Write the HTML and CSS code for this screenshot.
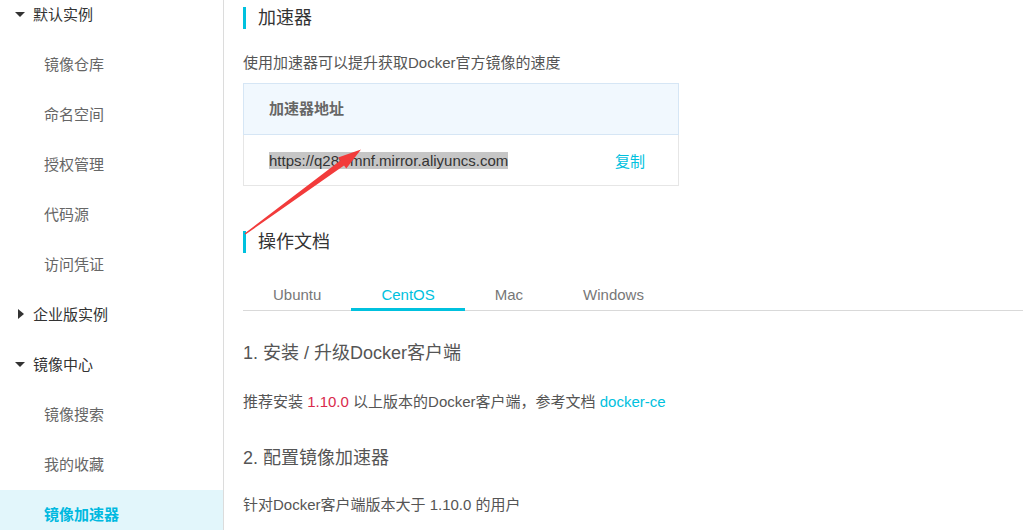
FILE: index.html
```html
<!DOCTYPE html>
<html lang="zh-CN">
<head>
    <meta charset="UTF-8">
    <meta name="viewport" content="width=device-width, initial-scale=1.0">
    <title>镜像加速器</title>
    <link rel="stylesheet" href="styles.css">
</head>
<body>

<div class="sidebar">
    <ul class="menu">
        <li class="menu-group open">默认实例</li>
        <li class="menu-item">镜像仓库</li>
        <li class="menu-item">命名空间</li>
        <li class="menu-item">授权管理</li>
        <li class="menu-item">代码源</li>
        <li class="menu-item">访问凭证</li>
        <li class="menu-group">企业版实例</li>
        <li class="menu-group open">镜像中心</li>
        <li class="menu-item">镜像搜索</li>
        <li class="menu-item">我的收藏</li>
        <li class="menu-item active">镜像加速器</li>
    </ul>
</div>

<div class="main">
    <h2 class="section-title">加速器</h2>
    <p class="desc">使用加速器可以提升获取Docker官方镜像的速度</p>

    <div class="mirror-box">
        <div class="mirror-head">加速器地址</div>
        <div class="mirror-row">
            <span class="mirror-url">https://q28wmnf.mirror.aliyuncs.com</span>
            <a class="link">复制</a>
        </div>
    </div>

    <h2 class="section-title docs-title">操作文档</h2>

    <div class="tabs">
        <div class="tab">Ubuntu</div>
        <div class="tab active">CentOS</div>
        <div class="tab">Mac</div>
        <div class="tab">Windows</div>
    </div>

    <h3 class="step">1. 安装 / 升级Docker客户端</h3>
    <p class="text">推荐安装 <span class="version">1.10.0</span> 以上版本的Docker客户端，参考文档 <a class="link">docker-ce</a></p>

    <h3 class="step step-2">2. 配置镜像加速器</h3>
    <p class="text text-2">针对Docker客户端版本大于 1.10.0 的用户</p>
</div>

<!-- annotation arrow -->
<svg class="arrow" width="1023" height="530" viewBox="0 0 1023 530">
    <polygon fill="#f23b3b" points="244.6,233.4 340.4,160.6 338.1,157.4 361,149.5 346.3,168.6 344,165.4 245.4,234.6"/>
</svg>

</body>
</html>
```

FILE: styles.css
```css
body {
    font-family: "Liberation Sans", "Noto Sans CJK SC", sans-serif;
    font-size: 15px;
    color: #555;
    margin: 0;
    height: 530px;
    overflow: hidden;
    display: flex;
    position: relative;
    background: #fff;
}

.sidebar {
    width: 223px;
    flex-shrink: 0;
    border-right: 1px solid #dcdcdc;
}

.menu {
    list-style: none;
    margin: -10px 0 0;
    padding: 0;
}

.menu li {
    height: 50px;
    line-height: 50px;
    display: flex;
    align-items: center;
}

.menu-group {
    color: #333;
    padding-left: 33px;
    position: relative;
}

.menu-group::before {
    content: "";
    position: absolute;
    left: 18px;
    top: 19px;
    border-top: 5.5px solid transparent;
    border-bottom: 5.5px solid transparent;
    border-left: 6px solid #333;
}

.menu-group.open::before {
    left: 15px;
    top: 22px;
    border-left: 5.5px solid transparent;
    border-right: 5.5px solid transparent;
    border-top: 5px solid #333;
    border-bottom: 0;
}

.menu-item {
    color: #666;
    padding-left: 44px;
}

.menu-item.active {
    background: #e2f6fb;
    color: #00b9e0;
    font-weight: bold;
}

.main {
    flex: 1;
    padding: 7px 0 0 19px;
}

.section-title {
    margin: 0;
    height: 22px;
    line-height: 22px;
    font-size: 18px;
    font-weight: normal;
    color: #333;
    border-left: 3px solid #00c1de;
    padding-left: 12px;
}

.desc {
    margin: 24px 0 0;
    line-height: 20px;
    color: #555;
}

.mirror-box {
    width: 436px;
    margin-top: 10px;
}

.mirror-head {
    height: 50px;
    line-height: 50px;
    padding-left: 25px;
    background: #f1f8fe;
    border: 1px solid #d6e6f5;
    color: #666;
    font-weight: bold;
}

.mirror-row {
    height: 50px;
    display: flex;
    align-items: center;
    justify-content: space-between;
    padding: 0 33px 0 25px;
    border: 1px solid #e6e6e6;
    border-top: none;
}

.mirror-url {
    background: #c6c6c6;
    color: #333;
}

.link {
    color: #00c1de;
    cursor: pointer;
}

.docs-title {
    margin-top: 45px;
}

.tabs {
    display: flex;
    margin-top: 29px;
    border-bottom: 1px solid #d9d9d9;
}

.tab {
    padding: 0 30px;
    line-height: 26px;
    color: #777;
    border-bottom: 3px solid transparent;
    margin-bottom: -1px;
    cursor: pointer;
}

.tab.active {
    color: #00c1de;
    border-bottom-color: #00c1de;
}

.step {
    margin: 30px 0 0;
    font-size: 18px;
    font-weight: normal;
    line-height: 24px;
    color: #555;
}

.text {
    margin: 27px 0 0;
    line-height: 20px;
    color: #555;
}

.version {
    color: #d9294c;
}

.step-2 {
    margin-top: 34px;
}

.text-2 {
    margin-top: 25px;
}

.arrow {
    position: absolute;
    left: 0;
    top: 0;
    pointer-events: none;
}
```
